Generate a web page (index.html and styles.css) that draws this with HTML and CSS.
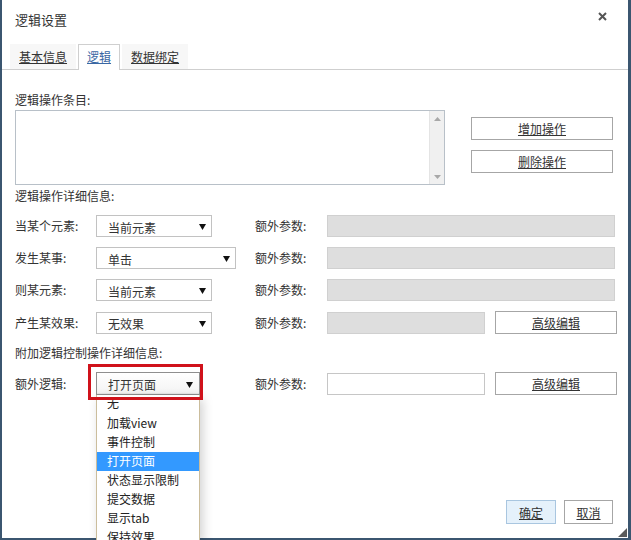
FILE: index.html
```html
<!DOCTYPE html>
<html lang="zh-CN">
<head>
<meta charset="utf-8">
<title>逻辑设置</title>
<link rel="stylesheet" href="styles.css">
</head>
<body>
<div class="dialog">
  <div class="header">
    <span class="title">逻辑设置</span>
    <span class="close"><svg width="9" height="9" viewBox="0 0 9 9"><path d="M1 1L8 8M8 1L1 8" stroke="#555" stroke-width="2"/></svg></span>
  </div>
  <div class="tabs">
    <span class="tab">基本信息</span>
    <span class="tab active">逻辑</span>
    <span class="tab">数据绑定</span>
  </div>
  <div class="content">
    <div class="label sec1">逻辑操作条目:</div>
    <div class="list-row">
      <div class="listbox">
        <div class="scrollbar">
          <svg width="7" height="4" viewBox="0 0 7 4"><path d="M0 4L3.5 0L7 4Z" fill="#a8a8a8"/></svg>
          <svg width="7" height="4" viewBox="0 0 7 4"><path d="M0 0L3.5 4L7 0Z" fill="#a8a8a8"/></svg>
        </div>
      </div>
      <div class="ops">
        <button class="btn op">增加操作</button>
        <button class="btn op">删除操作</button>
      </div>
    </div>
    <div class="label sec2">逻辑操作详细信息:</div>
    <div class="grid">
      <span class="label">当某个元素:</span>
      <div class="select s1"><span>当前元素</span><svg width="7" height="6" viewBox="0 0 7 6"><path d="M0 0H7L3.5 6Z" fill="#111"/></svg></div>
      <span class="label">额外参数:</span>
      <div class="input disabled wide"></div>

      <span class="label">发生某事:</span>
      <div class="select s2"><span>单击</span><svg width="7" height="6" viewBox="0 0 7 6"><path d="M0 0H7L3.5 6Z" fill="#111"/></svg></div>
      <span class="label">额外参数:</span>
      <div class="input disabled wide"></div>

      <span class="label">则某元素:</span>
      <div class="select s1"><span>当前元素</span><svg width="7" height="6" viewBox="0 0 7 6"><path d="M0 0H7L3.5 6Z" fill="#111"/></svg></div>
      <span class="label">额外参数:</span>
      <div class="input disabled wide"></div>

      <span class="label">产生某效果:</span>
      <div class="select s1"><span>无效果</span><svg width="7" height="6" viewBox="0 0 7 6"><path d="M0 0H7L3.5 6Z" fill="#111"/></svg></div>
      <span class="label">额外参数:</span>
      <div class="pair"><div class="input disabled short"></div><button class="btn adv">高级编辑</button></div>
    </div>
    <div class="label sec3">附加逻辑控制操作详细信息:</div>
    <div class="grid g2">
      <span class="label">额外逻辑:</span>
      <div class="select-wrap">
        <div class="select s3 focused"><span>打开页面</span><svg width="7" height="6" viewBox="0 0 7 6"><path d="M0 0H7L3.5 6Z" fill="#111"/></svg></div>
        <div class="highlight-box"></div>
        <ul class="dropdown">
          <li>无</li>
          <li>加载view</li>
          <li>事件控制</li>
          <li class="selected">打开页面</li>
          <li>状态显示限制</li>
          <li>提交数据</li>
          <li>显示tab</li>
          <li>保持效果</li>
        </ul>
      </div>
      <span class="label">额外参数:</span>
      <div class="pair"><div class="input short"></div><button class="btn adv">高级编辑</button></div>
    </div>
  </div>
  <div class="footer">
    <button class="btn ok">确定</button>
    <button class="btn cancel">取消</button>
  </div>
  <div class="grip"></div>
</div>
</body>
</html>
```

FILE: styles.css
```css
html, body {
  margin: 0;
  padding: 0;
  overflow: hidden;
  background: #ffffff;
}

.dialog {
  position: relative;
  width: 631px;
  height: 540px;
  box-sizing: border-box;
  border-left: 2px solid #3b5670;
  border-right: 3px solid #3b5670;
  border-bottom: 2px solid #3b5670;
  display: flex;
  flex-direction: column;
  font-family: "Noto Sans CJK SC", "Noto Sans", sans-serif;
  font-size: 12px;
  color: #333;
  background: #fff;
}

.header {
  height: 44px;
  display: flex;
  justify-content: space-between;
  align-items: flex-start;
  padding: 0 21px 0 13px;
  box-sizing: border-box;
}

.title {
  font-size: 13px;
  line-height: 16px;
  padding-top: 12px;
  color: #333;
}

.close {
  display: flex;
  margin-top: 12px;
}

.tabs {
  display: flex;
  gap: 2px;
  padding-left: 8px;
  height: 25px;
  border-bottom: 1px solid #cfcfcf;
}

.tab {
  height: 25px;
  box-sizing: border-box;
  padding: 0 8px;
  background: #f7f7f7;
  color: #333;
  text-decoration: underline;
  border: 1px solid transparent;
  border-bottom: none;
  line-height: 24px;
}

.tab.active {
  background: #fff;
  border-color: #cfcfcf;
  color: #3a67a3;
  height: 26px;
  margin-bottom: -1px;
}

.content {
  padding: 0 12px 0 13px;
}

.label {
  line-height: 16px;
  color: #333;
  white-space: nowrap;
}

.sec1 { margin-top: 22px; }
.sec2 { margin-top: 3px; }
.sec3 { margin-top: 11px; }

.list-row {
  display: flex;
  align-items: flex-start;
  margin-top: 2px;
}

.listbox {
  width: 430px;
  height: 75px;
  box-sizing: border-box;
  border: 1px solid #b8c0c8;
  display: flex;
  justify-content: flex-end;
}

.scrollbar {
  width: 15px;
  background: #f0f0f0;
  border-left: 1px solid #e4e4e4;
  display: flex;
  flex-direction: column;
  align-items: center;
  justify-content: space-between;
  padding: 6px 0 5px;
  box-sizing: border-box;
}

.ops {
  display: flex;
  flex-direction: column;
  gap: 10px;
  margin-left: 26px;
  padding-top: 7px;
}

.btn {
  font: inherit;
  color: #333;
  background: #fff;
  border: 1px solid #a6a6a6;
  text-decoration: underline;
  padding: 0;
  margin: 0;
  height: 23px;
  box-sizing: border-box;
  cursor: pointer;
}

.op {
  width: 142px;
}

.grid {
  display: grid;
  grid-template-columns: 81px 159px 72px 1fr;
  row-gap: 10px;
  align-items: center;
  margin-top: 11px;
}

.grid .label {
  line-height: 22px;
}

.select {
  height: 22px;
  box-sizing: border-box;
  border: 1px solid #c2c2c2;
  background: #fff;
  display: flex;
  align-items: center;
  justify-content: space-between;
  padding: 2px 5px 0 11px;
  color: #333;
}

.s1 { width: 116px; }
.s2 { width: 140px; }
.s3 { width: 104px; padding-right: 6px; }

.select.focused {
  border-color: #8f8f8f;
  background: linear-gradient(#ffffff, #f3f3f3);
  box-shadow: inset 0 -1px 1px rgba(0,0,0,0.06);
  height: 23px;
}

.input {
  height: 22px;
  box-sizing: border-box;
  border: 1px solid #c6c6c6;
  background: #fff;
}

.input.disabled {
  background: #dedede;
  border-color: #d0d0d0;
}

.wide { width: 288px; }
.short { width: 158px; }

.pair {
  display: flex;
  gap: 10px;
  align-items: center;
}

.adv {
  width: 122px;
  height: 23px;
}

.select-wrap {
  position: relative;
  width: 104px;
}

.highlight-box {
  position: absolute;
  left: -8px;
  top: -8px;
  width: 115px;
  height: 36px;
  box-sizing: border-box;
  border: 3px solid #d0121b;
  z-index: 3;
}

.dropdown {
  position: absolute;
  left: 0;
  top: 23px;
  width: 104px;
  height: 146px;
  box-sizing: border-box;
  margin: 0;
  padding: 0;
  list-style: none;
  background: #fff;
  border: 1px solid #cbbd9c;
  border-top: none;
  box-shadow: 3px 4px 10px rgba(0,0,0,0.18);
  overflow: hidden;
  z-index: 2;
}

.dropdown li {
  height: 19px;
  line-height: 17px;
  padding-left: 10px;
  color: #222;
  white-space: nowrap;
}

.dropdown li:first-child {
  margin-top: -2px;
  height: 21px;
  line-height: 20px;
}

.dropdown li.selected {
  background: #3399ff;
  color: #fff;
}

.footer {
  margin-top: auto;
  display: flex;
  justify-content: flex-end;
  gap: 8px;
  padding: 0 15px 14px 0;
}

.ok {
  width: 50px;
  height: 24px;
  background: #e5f1fb;
  border-color: #a9c6e0;
}

.cancel {
  width: 49px;
  height: 24px;
}

.grip {
  position: absolute;
  right: 1px;
  bottom: 1px;
  width: 0;
  height: 0;
  border-left: 9px solid transparent;
  border-bottom: 9px solid #5a5a5a;
}
```
